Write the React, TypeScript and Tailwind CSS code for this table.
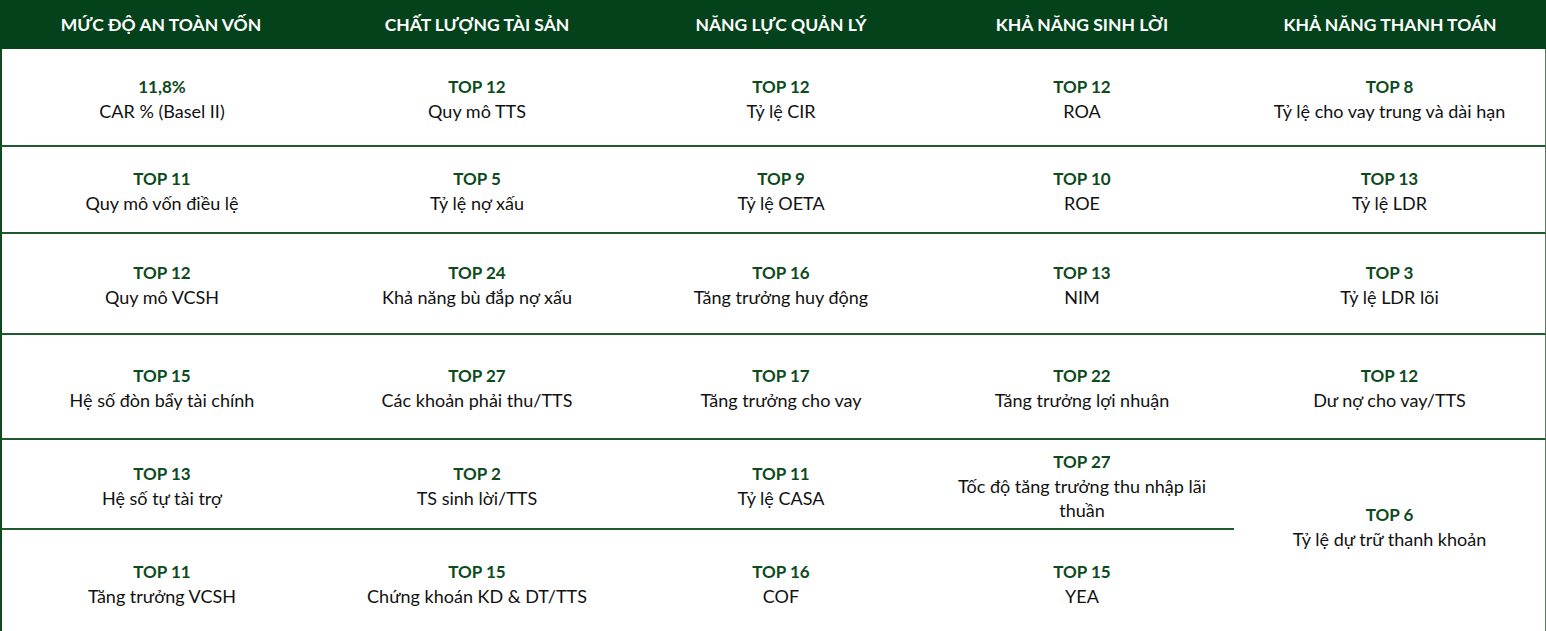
const headers = [
	"MỨC ĐỘ AN TOÀN VỐN",
	"CHẤT LƯỢNG TÀI SẢN",
	"NĂNG LỰC QUẢN LÝ",
	"KHẢ NĂNG SINH LỜI",
	"KHẢ NĂNG THANH TOÁN",
];

type Cell = { top: string; label: React.ReactNode };

// rows 5 and 6 only have 4 cells: the last column is one merged cell there
const rows: Cell[][] = [
	[
		{ top: "11,8%", label: "CAR % (Basel II)" },
		{ top: "TOP 12", label: "Quy mô TTS" },
		{ top: "TOP 12", label: "Tỷ lệ CIR" },
		{ top: "TOP 12", label: "ROA" },
		{ top: "TOP 8", label: "Tỷ lệ cho vay trung và dài hạn" },
	],
	[
		{ top: "TOP 11", label: "Quy mô vốn điều lệ" },
		{ top: "TOP 5", label: "Tỷ lệ nợ xấu" },
		{ top: "TOP 9", label: "Tỷ lệ OETA" },
		{ top: "TOP 10", label: "ROE" },
		{ top: "TOP 13", label: "Tỷ lệ LDR" },
	],
	[
		{ top: "TOP 12", label: "Quy mô VCSH" },
		{ top: "TOP 24", label: "Khả năng bù đắp nợ xấu" },
		{ top: "TOP 16", label: "Tăng trưởng huy động" },
		{ top: "TOP 13", label: "NIM" },
		{ top: "TOP 3", label: "Tỷ lệ LDR lõi" },
	],
	[
		{ top: "TOP 15", label: "Hệ số đòn bẩy tài chính" },
		{ top: "TOP 27", label: "Các khoản phải thu/TTS" },
		{ top: "TOP 17", label: "Tăng trưởng cho vay" },
		{ top: "TOP 22", label: "Tăng trưởng lợi nhuận" },
		{ top: "TOP 12", label: "Dư nợ cho vay/TTS" },
	],
	[
		{ top: "TOP 13", label: "Hệ số tự tài trợ" },
		{ top: "TOP 2", label: "TS sinh lời/TTS" },
		{ top: "TOP 11", label: "Tỷ lệ CASA" },
		{
			top: "TOP 27",
			label: (
				<>
					Tốc độ tăng trưởng thu nhập lãi
					<br />
					thuần
				</>
			),
		},
	],
	[
		{ top: "TOP 11", label: "Tăng trưởng VCSH" },
		{ top: "TOP 15", label: "Chứng khoán KD & DT/TTS" },
		{ top: "TOP 16", label: "COF" },
		{ top: "TOP 15", label: "YEA" },
	],
];

const CellBox = ({
	cell,
	className = "",
}: {
	cell: Cell;
	className?: string;
}) => (
	<div
		className={`flex flex-col items-center justify-center text-center leading-[24px] pt-[3px] ${className}`}
	>
		<span className="font-bold text-[17px] text-[#0d4a1c]">{cell.top}</span>
		<span className="text-[18px] text-[#111111]">{cell.label}</span>
	</div>
);

export default function App() {
	return (
		<div
			className="w-[1546px] h-[631px] overflow-hidden bg-white"
			style={{ fontFamily: "Lato, 'Open Sans', sans-serif" }}
		>
			<div className="grid grid-cols-[322px_310px_298px_304px_312px] grid-rows-[49px_98px_87px_101px_105px_90px_104px]">
				{headers.map(h => (
					<div
						key={h}
						className="flex items-center justify-center bg-[#03421a] font-bold text-[17.5px] text-white pt-[1px]"
					>
						{h}
					</div>
				))}

				{rows.map((row, r) => (
					<>
						{row.map((cell, c) => (
							<CellBox
								key={`${r}-${c}`}
								cell={cell}
								className={`${r < 5 ? "border-b-2 border-b-[#1f5a2c]" : ""} ${
									c === 0 ? "border-l-2 border-l-[#0d4a1c]" : ""
								} ${c === 4 ? "border-r border-r-[#5b7a63]" : ""}`}
							/>
						))}
						{r === 4 && (
							<CellBox
								key="merged"
								cell={{ top: "TOP 6", label: "Tỷ lệ dự trữ thanh khoản" }}
								className="row-span-2 border-r border-r-[#5b7a63] pb-[24px]"
							/>
						)}
					</>
				))}
			</div>
		</div>
	);
}
